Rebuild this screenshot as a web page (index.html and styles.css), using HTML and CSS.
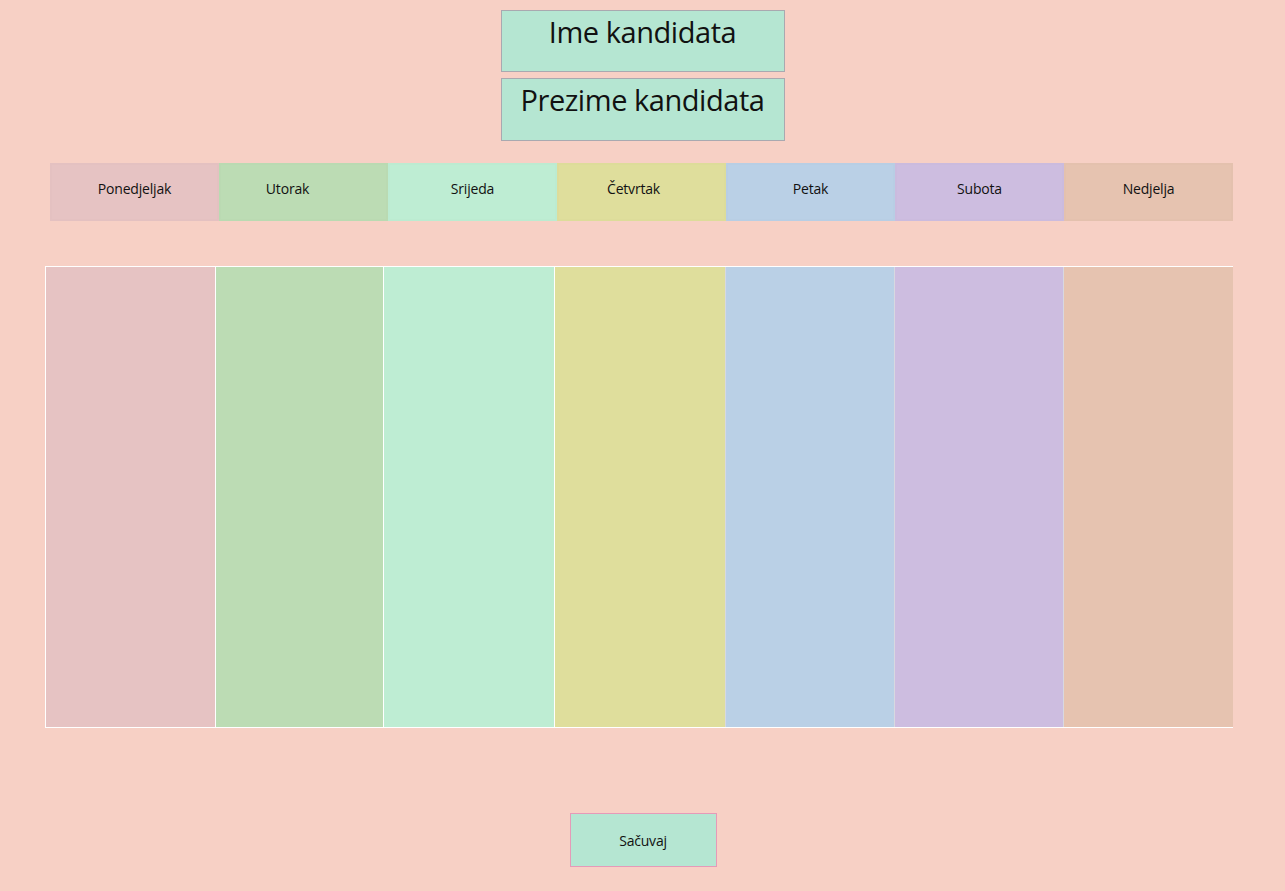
FILE: index.html
```html
<!DOCTYPE html>
<html>
<head>
<meta charset="utf-8">
<title>Raspored</title>
<link rel="stylesheet" href="styles.css">
</head>
<body>
<div class="page">
  <div class="names">
    <div class="name-box">Ime kandidata</div>
    <div class="name-box">Prezime kandidata</div>
  </div>
  <div class="days">
    <div class="day d1">Ponedjeljak</div>
    <div class="day d2 shift-l">Utorak</div>
    <div class="day d3">Srijeda</div>
    <div class="day d4 shift-s">Četvrtak</div>
    <div class="day d5">Petak</div>
    <div class="day d6">Subota</div>
    <div class="day d7">Nedjelja</div>
  </div>
  <div class="cols">
    <div class="col d1 first"></div>
    <div class="col d2"></div>
    <div class="col d3"></div>
    <div class="col d4"></div>
    <div class="col d5"></div>
    <div class="col d6"></div>
    <div class="col d7"></div>
  </div>
  <div class="actions">
    <button class="save">Sačuvaj</button>
  </div>
</div>
</body>
</html>
```

FILE: styles.css
```css
html, body {
  margin: 0;
  padding: 0;
  background: #f7d0c5;
  font-family: "Open Sans", "Noto Sans", sans-serif;
  color: #111;
}
.page {
  width: 1285px;
  height: 891px;
  display: flex;
  flex-direction: column;
}
.names {
  display: flex;
  flex-direction: column;
  align-items: center;
  gap: 6px;
  padding-top: 10px;
}
.name-box {
  box-sizing: border-box;
  width: 284px;
  height: 62px;
  border: 1px solid #a9a9b0;
  background: #b5e6d2;
  font-size: 29px;
  line-height: 40px;
  text-align: center;
  letter-spacing: -0.45px;
  padding-top: 1px;
}
.name-box + .name-box {
  height: 63px;
}
.days {
  margin: 22px 0 0 50px;
  display: grid;
  grid-template-columns: repeat(7, 169px);
  height: 58px;
}
.day {
  box-sizing: border-box;
  border: 2px solid rgba(0, 0, 0, 0.008);
  display: flex;
  align-items: center;
  justify-content: center;
  font-size: 14px;
  letter-spacing: -0.2px;
  padding-bottom: 8px;
}
.shift-l { padding-right: 32px; }
.shift-s { padding-right: 16px; }
.d1 { background: #e6c3c3; }
.d2 { background: #bcdcb4; }
.d3 { background: #beedd3; }
.d4 { background: #dfde9c; }
.d5 { background: #bad0e6; }
.d6 { background: #cdbde0; }
.d7 { background: #e6c3b0; }
.cols {
  margin: 45px 0 0 45px;
  display: grid;
  grid-template-columns: 171px 168px 171px 171px 169px 169px 169px;
  height: 462px;
  border-top: 1px solid #fff;
  border-bottom: 1px solid #fff;
  width: 1188px;
  box-sizing: border-box;
}
.col {
  border-right: 1px solid #fff;
}
.col.first {
  border-left: 1px solid #fff;
}
.col.d4, .col.d5, .col.d6 {
  border-right-color: #d8d8e0;
}
.col.d7 {
  border-right: none;
}
.actions {
  display: flex;
  justify-content: center;
  padding-top: 85px;
  padding-left: 1px;
}
.save {
  width: 147px;
  height: 54px;
  background: #b5e6d2;
  border: 1px solid #e59ab8;
  font-family: "Open Sans", "Noto Sans", sans-serif;
  font-size: 14px;
  color: #111;
  letter-spacing: -0.2px;
  padding: 0;
}
```
